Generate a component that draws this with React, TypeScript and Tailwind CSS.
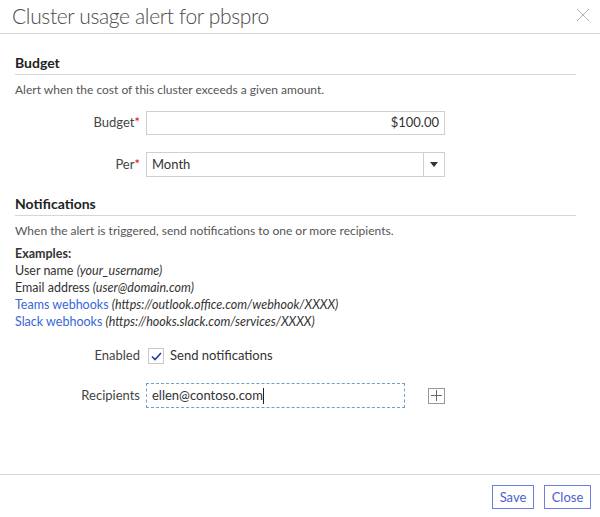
import React from "react";

function Label({ text, required }: { text: string; required?: boolean }) {
  return (
    <div className="w-[131px] text-right pr-[6px] text-[13px] text-[#444]">
      {text}
      {required && <span className="text-[#e00]">*</span>}
    </div>
  );
}

export default function App() {
  return (
    <div className="w-[600px] h-[517px] bg-white flex flex-col font-['Lato',sans-serif] text-[#333]">
      <div className="h-[34px] border-b border-[#d6d6d6] flex items-start justify-between pl-[12px] pr-[10px]">
        <h1 className="text-[21px] font-light tracking-[-0.35px] leading-[32px] text-[#4a4a4a]">Cluster usage alert for pbspro</h1>
        <svg width="14" height="14" viewBox="0 0 14 14" className="mt-[8px]" stroke="#b4b4b4" strokeWidth="1">
          <path d="M1 1 L13 13 M13 1 L1 13" />
        </svg>
      </div>

      <div className="flex-1 px-[15px] pr-[24px]">
        <div className="mt-[20px] border-b border-[#d6d6d6] pb-[2px]">
          <h2 className="text-[14px] font-bold leading-[18px] text-[#222]">Budget</h2>
        </div>
        <p className="text-[12px] leading-[17px] mt-[6px] text-[#555]">Alert when the cost of this cluster exceeds a given amount.</p>

        <div className="flex items-center mt-[13px]">
          <Label text="Budget" required />
          <div className="w-[299px] h-[24px] border border-[#cfcfcf] flex items-center justify-end px-[5px] text-[13px]">$100.00</div>
        </div>
        <div className="flex items-center mt-[17px]">
          <Label text="Per" required />
          <div className="w-[299px] h-[25px] border border-[#cfcfcf] flex items-center text-[13px]">
            <span className="flex-1 pl-[5px]">Month</span>
            <div className="w-[21px] h-full border-l border-[#cfcfcf] flex items-center justify-center">
              <svg width="8" height="5" viewBox="0 0 8 5"><path d="M0 0 H8 L4 5 Z" fill="#333" /></svg>
            </div>
          </div>
        </div>

        <div className="mt-[18px] border-b border-[#d6d6d6] pb-[2px]">
          <h2 className="text-[14px] font-bold leading-[18px] text-[#222]">Notifications</h2>
        </div>
        <p className="text-[12px] leading-[17px] mt-[6px] text-[#555]">When the alert is triggered, send notifications to one or more recipients.</p>

        <div className="text-[12.5px] leading-[17px] mt-[6px]">
          <div className="font-bold">Examples:</div>
          <div>User name <i>(your_username)</i></div>
          <div>Email address <i>(user@domain.com)</i></div>
          <div><span className="text-[#3a66d6]">Teams webhooks</span> <i>(https://outlook.office.com/webhook/XXXX)</i></div>
          <div><span className="text-[#3a66d6]">Slack webhooks</span> <i>(https://hooks.slack.com/services/XXXX)</i></div>
        </div>

        <div className="flex items-center h-[20px] mt-[16px]">
          <Label text="Enabled" />
          <div className="ml-[2px] w-[16px] h-[16px] border border-[#c8c8c8] flex items-center justify-center">
            <svg width="11" height="9" viewBox="0 0 11 9"><path d="M1 4.5 L4 7.5 L10 1" fill="none" stroke="#1f3f9a" strokeWidth="1.6" /></svg>
          </div>
          <span className="ml-[6px] text-[13px]">Send notifications</span>
        </div>

        <div className="flex items-center mt-[17px]">
          <Label text="Recipients" />
          <div className="w-[259px] h-[25px] border border-dashed border-[#6a9fd8] flex items-center px-[5px] text-[13px]">
            ellen@contoso.com<span className="w-px h-[16px] bg-[#222]" />
          </div>
          <div className="ml-[23px] w-[17px] h-[16px] border border-[#999] flex items-center justify-center">
            <svg width="11" height="11" viewBox="0 0 11 11" stroke="#666" strokeWidth="1"><path d="M5.5 0 V11 M0 5.5 H11" /></svg>
          </div>
        </div>
      </div>

      <div className="h-[43px] border-t border-[#d6d6d6] flex items-start justify-end gap-[10px] pr-[9px] pt-[10px]">
        <button className="w-[42px] h-[24px] border border-[#6c7fe0] text-[#4a61d0] text-[13px] leading-none">Save</button>
        <button className="w-[47px] h-[24px] border border-[#6c7fe0] text-[#4a61d0] text-[13px] leading-none">Close</button>
      </div>
    </div>
  );
}
